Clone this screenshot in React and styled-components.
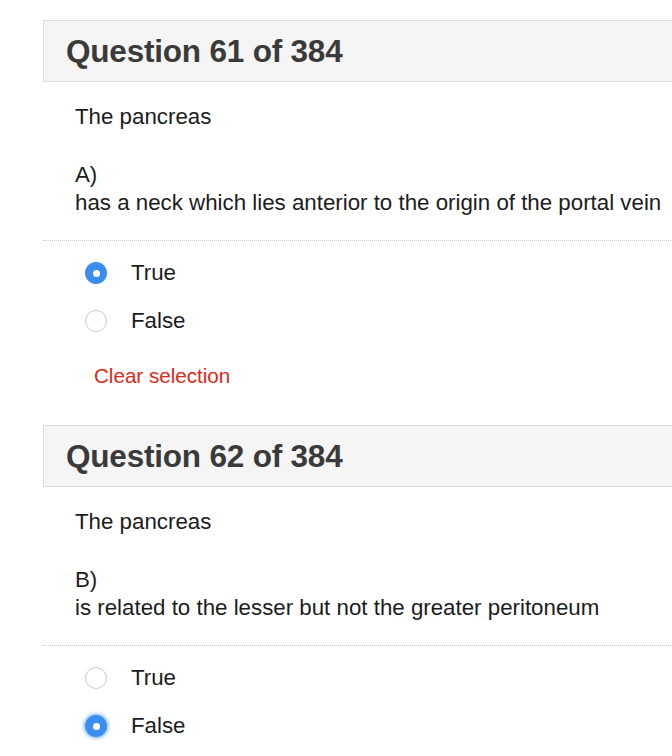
import styled, { createGlobalStyle } from "styled-components";

const Global = createGlobalStyle`
  body {
    margin: 0;
    background: #fff;
    font-family: "Liberation Sans", Arial, Helvetica, sans-serif;
    overflow: hidden;
  }
`;

const Page = styled.div`
  width: 672px;
  height: 756px;
  overflow: hidden;
  padding: 20px 0 0 43px;
  box-sizing: border-box;
`;

const Question = styled.section`
  width: 700px;
  margin-bottom: 35px;
`;

const Header = styled.div`
  height: 60px;
  background: #f5f5f5;
  border: 1px solid #dcdcdc;
  border-right: none;
  display: flex;
  align-items: center;
  padding-left: 22px;
`;

const Title = styled.h2`
  margin: 0;
  font-size: 31.5px;
  font-weight: 700;
  color: #3a3a3a;
  letter-spacing: -0.2px;
`;

const Body = styled.div`
  padding: 21px 0 0 32px;
  color: #1c1c1c;
  font-size: 22.3px;
  line-height: 28px;
`;

const Stem = styled.p`
  margin: 0 0 30px;
`;

const Option = styled.p`
  margin: 0;
`;

const Divider = styled.div`
  margin: 23px 0 0 -32px;
  border-top: 1px dotted #c8c8c8;
`;

const Choices = styled.div`
  padding: 18px 0 0 10px;
  display: flex;
  flex-direction: column;
  gap: 20px;
`;

const Choice = styled.label`
  display: flex;
  align-items: center;
  gap: 24px;
  height: 28px;
  color: #1c1c1c;
`;

const Radio = styled.span`
  width: 22px;
  height: 22px;
  border-radius: 50%;
  box-sizing: border-box;
  display: flex;
  align-items: center;
  justify-content: center;
  background: ${(p) => (p.checked ? "#3a8ef2" : "#fff")};
  border: ${(p) => (p.checked ? "none" : "1px solid #c9c9c9")};
  box-shadow: ${(p) => (p.glow ? "0 0 3px 2px rgba(58,142,242,0.45)" : "none")};
  &::after {
    content: "";
    display: ${(p) => (p.checked ? "block" : "none")};
    width: 7px;
    height: 7px;
    border-radius: 50%;
    background: #fff;
  }
`;

const Clear = styled.a`
  display: block;
  margin: 27px 0 0 19px;
  color: #d9281a;
  font-size: 20.6px;
  line-height: 28px;
`;

const questions = [
  {
    n: 61,
    letter: "A)",
    text: "has a neck which lies anterior to the origin of the portal vein",
    answer: "True",
  },
  {
    n: 62,
    letter: "B)",
    text: "is related to the lesser but not the greater peritoneum",
    answer: "False",
    glow: true,
  },
];

export default function App() {
  return (
    <>
      <Global />
      <Page>
        {questions.map((q) => (
          <Question key={q.n}>
            <Header>
              <Title>Question {q.n} of 384</Title>
            </Header>
            <Body>
              <Stem>The pancreas</Stem>
              <Option>{q.letter}</Option>
              <Option>{q.text}</Option>
              <Divider />
              <Choices>
                {["True", "False"].map((c) => (
                  <Choice key={c}>
                    <Radio checked={q.answer === c} glow={q.glow && q.answer === c} />
                    {c}
                  </Choice>
                ))}
              </Choices>
              <Clear>Clear selection</Clear>
            </Body>
          </Question>
        ))}
      </Page>
    </>
  );
}
